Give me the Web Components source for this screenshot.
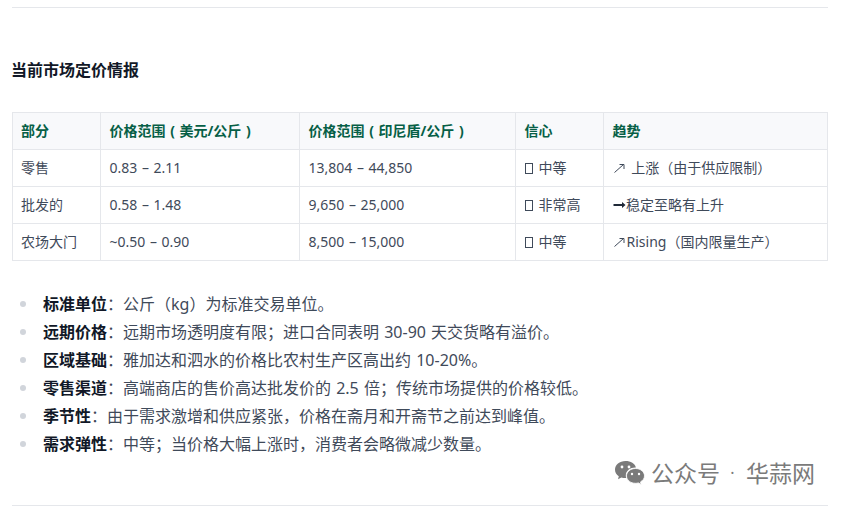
<!DOCTYPE html>
<html lang="zh"><head><meta charset="utf-8">
<style>
html,body{margin:0;padding:0;background:#fff}
body{font-family:"Noto Sans","Noto Sans CJK SC",sans-serif;width:843px;height:507px;overflow:hidden;position:relative}
</style></head><body>
<market-report></market-report>
<script>
const UP='<svg class="ic" width="14" height="12" viewBox="0 0 14 12" fill="none" stroke="#3f4a5a" stroke-width="1"><path d="M1.500 10.500 10.500 2.500M6.500 2.500H11V7"/></svg>';
const RT='<svg class="ic" width="13.500" height="8" viewBox="0 0 13.500 8" fill="#1f2937"><path d="M.5 3h8.500V1l3.500 3-3.500 3V5H.5z"/></svg>';
class Base extends HTMLElement{
  constructor(){super();this.attachShadow({mode:'open'}).innerHTML=this.constructor.html}
}
class PriceTable extends Base{
  static html=`<style>
  :host{display:block;margin:0 15px 0 12px}
  table{border-collapse:collapse;width:815px;table-layout:fixed;font-size:14px;color:#3f4a5a;line-height:20px;word-spacing:1px}
  th,td{border:1px solid #e5e7eb;padding:0 0 0 8.5px;height:36px;text-align:left;box-sizing:content-box;white-space:nowrap}
  th:first-child,td:first-child{padding-left:8px}
  th{background:#f8f9fb;color:#065f46;font-weight:700}
  th span{display:inline-block;width:14px;text-align:center}
  .tofu{display:inline-block;width:6px;height:9px;border:1px solid #3f4a5a;margin:0 6px 0 0;vertical-align:-1px}
  .ic{display:inline-block;vertical-align:-1px}
  .ic.r{vertical-align:1px}
  </style>
  <table><colgroup><col style="width:88px"><col style="width:199px"><col style="width:216px"><col style="width:88px"><col style="width:224px"></colgroup>
  <tr><th>部分</th><th>价格范围<span>(</span>美元/公斤<span>)</span></th><th>价格范围<span>(</span>印尼盾/公斤<span>)</span></th><th>信心</th><th>趋势</th></tr>
  <tr><td>零售</td><td>0.83 – 2.11</td><td>13,804 – 44,850</td><td><span class="tofu"></span>中等</td><td>${UP} 上涨（由于供应限制）</td></tr>
  <tr><td>批发的</td><td>0.58 – 1.48</td><td>9,650 – 25,000</td><td><span class="tofu"></span>非常高</td><td>${RT.replace('class="ic"','class="ic r"')}稳定至略有上升</td></tr>
  <tr><td>农场大门</td><td>~0.50 – 0.90</td><td>8,500 – 15,000</td><td><span class="tofu"></span>中等</td><td>${UP}Rising（国内限量生产）</td></tr>
  </table>`;
}
class BulletItem extends Base{
  static html=`<style>
  :host{display:flex;align-items:center;height:28px;font-size:16px;color:#3f4a5a;word-spacing:1px}
  i{width:6px;height:6px;border-radius:50%;background:#d1d5db;margin:2px 17px 0 20px;flex:none}
  b{color:#111827;font-weight:700}
  </style><i></i><b><slot name="k"></slot></b><span><slot></slot></span>`;
}
class WeChatMark extends Base{
  static html=`<style>
  :host{position:absolute;left:614px;top:459px;display:flex;align-items:center;font-size:23px;color:#7b7b7b;line-height:28px;white-space:nowrap}
  svg{display:block;flex:none;margin-right:5px}
  .d{margin:0 10px 0 9px;font-size:16px;width:7px;text-align:center}
  </style><svg width="32" height="27" viewBox="0 0 32 27" fill="#7a7a7a">
  <path d="M11.500 1C5.600 1 1 4.900 1 9.700c0 2.700 1.500 5 3.800 6.600L4 19.300l3.400-1.800c1.200.4 2.600.6 4 .6h.8c-.3-.9-.4-1.700-.4-2.600 0-4.500 4.300-8 9.500-8h.6C21 3.600 16.700 1 11.500 1z"/>
  <circle cx="8" cy="7" r="1.400" fill="#fff"/><circle cx="15" cy="7" r="1.400" fill="#fff"/>
  <path d="M21.500 8.500c-5 0-9 3.300-9 7.400s4 7.400 9 7.400c1 0 2-.1 2.900-.4l2.800 1.600-.7-2.600c2.400-1.400 4-3.500 4-6 0-4.100-4-7.400-9-7.400z" stroke="#fff" stroke-width=".8"/>
  <circle cx="18" cy="14" r="1.200" fill="#fff"/><circle cx="25" cy="14" r="1.200" fill="#fff"/>
  </svg><span>公众号</span><span class="d">·</span><span>华蒜网</span>`;
}
class MarketReport extends Base{
  static html=`<style>
  :host{display:block;width:843px;height:507px;box-sizing:border-box;padding-top:7px}
  hr{border:0;height:1px;background:#e5e7eb;margin:0 15px 0 12px}
  h2{font-size:16px;line-height:24px;font-weight:700;color:#111827;margin:50px 0 30px 11px}
  .list{display:block;margin-top:28px}
  .end{margin-top:48px}
  </style>
  <hr>
  <h2>当前市场定价情报</h2>
  <price-table></price-table>
  <div class="list">
  <bullet-item><span slot="k">标准单位</span>：公斤（kg）为标准交易单位。</bullet-item>
  <bullet-item><span slot="k">远期价格</span>：远期市场透明度有限；进口合同表明 30-90 天交货略有溢价。</bullet-item>
  <bullet-item><span slot="k">区域基础</span>：雅加达和泗水的价格比农村生产区高出约 10-20%。</bullet-item>
  <bullet-item><span slot="k">零售渠道</span>：高端商店的售价高达批发价的 2.5 倍；传统市场提供的价格较低。</bullet-item>
  <bullet-item><span slot="k">季节性</span>：由于需求激增和供应紧张，价格在斋月和开斋节之前达到峰值。</bullet-item>
  <bullet-item><span slot="k">需求弹性</span>：中等；当价格大幅上涨时，消费者会略微减少数量。</bullet-item>
  </div>
  <hr class="end">
  <wechat-mark></wechat-mark>`;
}
customElements.define('price-table',PriceTable);
customElements.define('bullet-item',BulletItem);
customElements.define('wechat-mark',WeChatMark);
customElements.define('market-report',MarketReport);
</script>
</body></html>
